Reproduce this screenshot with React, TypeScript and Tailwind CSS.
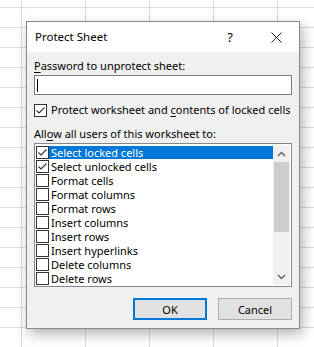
const items = [
  { label: 'Select locked cells', checked: true, selected: true },
  { label: 'Select unlocked cells', checked: true },
  { label: 'Format cells' },
  { label: 'Format columns' },
  { label: 'Format rows' },
  { label: 'Insert columns' },
  { label: 'Insert rows' },
  { label: 'Insert hyperlinks' },
  { label: 'Delete columns' },
  { label: 'Delete rows' },
];

function CheckBox({ checked }: { checked?: boolean }) {
  return (
    <div className="w-[13px] h-[13px] border border-[#333333] bg-white shrink-0 flex items-center justify-center">
      {checked && (
        <svg width="11" height="11" viewBox="0 0 11 11">
          <polyline points="1.5,5.5 4,8 9.5,2.5" fill="none" stroke="#333333" strokeWidth="1.1" />
        </svg>
      )}
    </div>
  );
}

function Chevron({ up }: { up?: boolean }) {
  return (
    <svg width="9" height="6" viewBox="0 0 9 6">
      <polyline
        points={up ? '1,5 4.5,1.5 8,5' : '1,1 4.5,4.5 8,1'}
        fill="none"
        stroke="#606060"
        strokeWidth="1.4"
      />
    </svg>
  );
}

export default function App() {
  return (
    <div
      className="w-[314px] h-[347px] overflow-hidden bg-white bg-[linear-gradient(to_right,#dadada_1px,transparent_1px),linear-gradient(to_bottom,#dadada_1px,transparent_1px)] bg-size-[64px_20px] bg-position-[21px_7px] pl-[26px] pt-[21px] text-[11px] text-black whitespace-nowrap"
      style={{ fontFamily: '"Noto Sans", sans-serif' }}
    >
      <div className="w-[274px] h-[308px] border border-[#888888] bg-[#f0f0f0] shadow-[3px_5px_12px_rgba(0,0,0,0.3)] flex flex-col">
        <div className="h-[30px] bg-white flex items-center pl-[8px] shrink-0">
          <span className="text-[11.5px] leading-none">Protect Sheet</span>
          <span className="ml-auto mr-[38px] text-[13px] leading-none">?</span>
          <svg width="11" height="11" viewBox="0 0 11 11" className="mr-[17px]">
            <path d="M0.5 0.5 L10.5 10.5 M10.5 0.5 L0.5 10.5" stroke="#222222" strokeWidth="1" />
          </svg>
        </div>
        <div className="px-[7px] flex flex-col">
          <div className="mt-[6px] leading-[16px]">
            <span className="underline underline-offset-2">P</span>assword to unprotect sheet:
          </div>
          <div className="mt-[1px] h-[20px] border border-[#7a7a7a] bg-white flex items-center pl-[2px]">
            <div className="w-px h-[13px] bg-black" />
          </div>
          <div className="mt-[7px] flex items-center gap-[4px] leading-[16px]">
            <CheckBox checked />
            <span>
              Protect worksheet and <span className="underline underline-offset-2">c</span>ontents of locked cells
            </span>
          </div>
          <div className="mt-[8px] leading-[16px]">
            All<span className="underline underline-offset-2">o</span>w all users of this worksheet to:
          </div>
          <div className="mt-[1px] h-[144px] border border-[#828790] bg-white flex p-[1px]">
            <div className="flex-1 flex flex-col">
              {items.map((it) => (
                <div key={it.label} className="h-[14px] flex items-center">
                  <CheckBox checked={it.checked} />
                  <div
                    className={`h-[13px] flex-1 pl-[2px] leading-[13px] ${
                      it.selected ? 'bg-[#0078d7] text-white' : 'text-black'
                    }`}
                  >
                    {it.label}
                  </div>
                </div>
              ))}
            </div>
            <div className="w-[17px] bg-[#f0f0f0] flex flex-col items-center">
              <div className="h-[17px] flex items-center justify-center">
                <Chevron up />
              </div>
              <div className="w-[15px] h-[70px] bg-[#cdcdcd]" />
              <div className="mt-auto h-[17px] flex items-center justify-center">
                <Chevron />
              </div>
            </div>
          </div>
          <div className="mt-[11px] flex justify-end gap-[11px]">
            <button className="w-[74px] h-[22px] border-2 border-[#0078d7] bg-[#e1e1e1] leading-none">OK</button>
            <button className="w-[74px] h-[22px] border border-[#adadad] bg-[#e1e1e1] leading-none">Cancel</button>
          </div>
        </div>
      </div>
    </div>
  );
}
